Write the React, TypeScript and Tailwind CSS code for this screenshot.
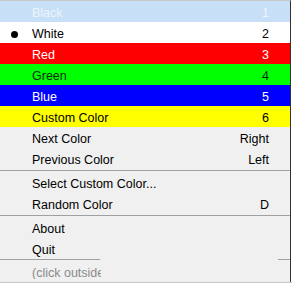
import React from "react";

type Row = { label: string; key?: string; bg: string; fg: string; dot?: boolean };

const colorRows: Row[] = [
  { label: "Black", key: "1", bg: "bg-[#c7e0f8]", fg: "text-[#eef4fb]" },
  { label: "White", key: "2", bg: "bg-white", fg: "text-black", dot: true },
  { label: "Red", key: "3", bg: "bg-[#ff0000]", fg: "text-white" },
  { label: "Green", key: "4", bg: "bg-[#00ff00]", fg: "text-[#0a2a0a]" },
  { label: "Blue", key: "5", bg: "bg-[#0000ff]", fg: "text-white" },
  { label: "Custom Color", key: "6", bg: "bg-[#ffff00]", fg: "text-black" },
  { label: "Next Color", key: "Right", bg: "", fg: "text-black" },
  { label: "Previous Color", key: "Left", bg: "", fg: "text-black" },
];

function Item({ r }: { r: Row }) {
  return (
    <div className={`flex h-[21px] items-center pt-[3px] ${r.bg} ${r.fg}`}>
      <div className="flex w-[32px] items-center pl-[11px]">
        {r.dot && <div className="h-[7px] w-[7px] rounded-full bg-black" />}
      </div>
      <div className="flex-1">{r.label}</div>
      <div className="pr-[21px]">{r.key}</div>
    </div>
  );
}

function Sep() {
  return (
    <div className="flex h-[3px] items-center">
      <div className="h-px w-full bg-[#a0a0a0]" />
    </div>
  );
}

export default function App() {
  return (
    <div
      className="h-[285px] w-[292px] bg-white text-[12.5px] leading-none"
      style={{ fontFamily: '"Liberation Sans", Arial, sans-serif' }}
    >
      <div className="w-[291px] border-r border-t border-r-[#333] border-t-[#c8c8c8] bg-[#f0f0f0]">
        {colorRows.map((r) => (
          <Item key={r.label} r={r} />
        ))}
        <Sep />
        <Item r={{ label: "Select Custom Color...", bg: "", fg: "text-black" }} />
        <Item r={{ label: "Random Color", key: "D", bg: "", fg: "text-black" }} />
        <Sep />
        <Item r={{ label: "About", bg: "", fg: "text-black" }} />
        <Item r={{ label: "Quit", bg: "", fg: "text-black" }} />
        <div className="flex h-[2px] items-start">
          <div className="h-px w-[100px] bg-[#a0a0a0]" />
          <div className="flex-1" />
          <div className="h-px w-[12px] bg-[#a0a0a0]" />
        </div>
        <div className="flex h-[21px] items-center pt-[3px] text-[#8a8a8a]">
          <div className="w-[32px]" />
          <div className="w-[69px] overflow-hidden whitespace-nowrap">(click outside</div>
        </div>
      </div>
      <div className="h-px w-[292px] bg-[#c8c8c8]" />
    </div>
  );
}
